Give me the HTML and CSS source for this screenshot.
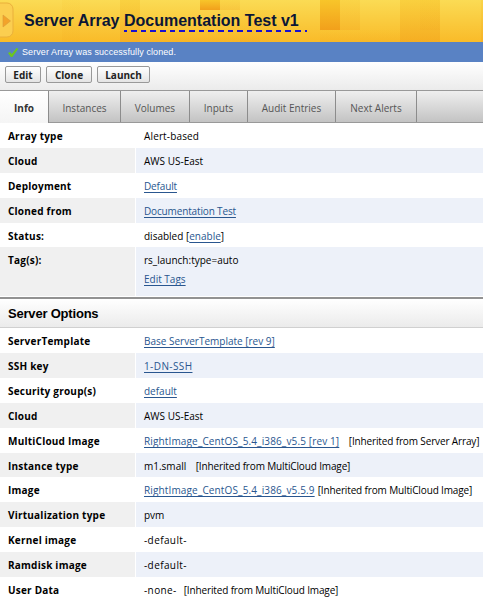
FILE: index.html
```html
<!DOCTYPE html>
<html lang="en">
<head>
<meta charset="utf-8">
<title>Server Array</title>
<link rel="stylesheet" href="styles.css">
</head>
<body>
<header class="banner">
  <svg class="banner-art" width="483" height="42" viewBox="0 0 483 42" aria-hidden="true">
    <defs>
      <linearGradient id="gold" x2="0" y2="1"><stop offset="0" stop-color="#fbdb54"/><stop offset="1" stop-color="#f9bb29"/></linearGradient>
      <linearGradient id="amber" x2="0" y2="1"><stop offset="0" stop-color="#f8c52a"/><stop offset="1" stop-color="#f2a01b"/></linearGradient>
    </defs>
    <rect width="483" height="42" fill="url(#gold)"/>
    <g fill="url(#amber)">
      <rect x="62" width="18" height="42" opacity=".12"/>
      <rect x="120" width="20" height="42" opacity=".45"/>
      <rect x="140" y="30" width="120" height="12" opacity=".25"/>
      <rect x="200" width="20" height="10"/>
      <rect x="220" width="20" height="10" opacity=".25"/>
      <rect x="240" y="10" width="40" height="32" opacity=".2"/>
      <rect x="320" width="20" height="30"/>
      <rect x="340" width="20" height="30" opacity=".3"/>
      <rect x="320" y="30" width="80" height="12" opacity=".15"/>
      <rect x="400" width="40" height="42" opacity=".5"/>
      <rect x="420" width="20" height="30" opacity=".15"/>
      <rect x="481" width="2" height="42" opacity=".3"/>
    </g>
    <rect x="-10" y="3" width="23" height="34" rx="6" fill="#fbce50" stroke="#eab03b"/>
    <path d="M3 15L10.5 21L3 27Z" fill="#f3a32a" stroke="#d99a3b" stroke-width=".6"/>
  </svg>
  <h1 class="title">Server Array <span class="title-name">Documentation Test v1</span></h1>
</header>
<div class="notice">
  <svg class="check" width="12" height="11" viewBox="0 0 12 11" aria-hidden="true"><path d="M1 6L3 5L4.8 7L9.6 1L11.3 1.8L5.4 10L3.8 10Z" fill="#6cc71e"/></svg>
  <span>Server Array was successfully cloned.</span>
</div>
<div class="toolbar">
  <button class="btn edit">Edit</button><button class="btn clone">Clone</button><button class="btn launch">Launch</button>
</div>
<nav class="tabs">
  <a class="tab info active">Info</a><a class="tab instances">Instances</a><a class="tab volumes">Volumes</a><a class="tab inputs">Inputs</a><a class="tab audit">Audit Entries</a><a class="tab alerts">Next Alerts</a>
</nav>
<dl class="rows summary">
  <dt>Array type</dt><dd class="loose">Alert-based</dd>
  <dt>Cloud</dt><dd>AWS US-East</dd>
  <dt>Deployment</dt><dd><a class="tight">Default</a></dd>
  <dt>Cloned from</dt><dd><a class="tight">Documentation Test</a></dd>
  <dt>Status:</dt><dd>disabled [<a>enable</a>]</dd>
  <dt class="tall">Tag(s):</dt><dd class="tall">rs_launch:type=auto<br><a>Edit Tags</a></dd>
</dl>
<h2 class="section">Server Options</h2>
<dl class="rows options">
  <dt>ServerTemplate</dt><dd><a>Base ServerTemplate [rev 9]</a></dd>
  <dt>SSH key</dt><dd><a class="looser">1-DN-SSH</a></dd>
  <dt>Security group(s)</dt><dd><a>default</a></dd>
  <dt>Cloud</dt><dd>AWS US-East</dd>
  <dt>MultiCloud Image</dt><dd><a class="loose">RightImage_CentOS_5.4_i386_v5.5 [rev 1]</a><span class="src wide">[Inherited from Server Array]</span></dd>
  <dt>Instance type</dt><dd>m1.small<span class="src wide">[Inherited from MultiCloud Image]</span></dd>
  <dt>Image</dt><dd><a class="loose">RightImage_CentOS_5.4_i386_v5.5.9</a><span class="src">[Inherited from MultiCloud Image]</span></dd>
  <dt>Virtualization type</dt><dd>pvm</dd>
  <dt>Kernel image</dt><dd class="looser">-default-</dd>
  <dt>Ramdisk image</dt><dd class="looser">-default-</dd>
  <dt>User Data</dt><dd><span class="looser">-none-</span><span class="src mid">[Inherited from MultiCloud Image]</span></dd>
</dl>
</body>
</html>
```
FILE: styles.css
```css
* { box-sizing: border-box; }
html, body { margin: 0; height: 603px; overflow: hidden; }
body { background: #fff; color: #000; font: 10px "Open Sans", "Noto Sans", sans-serif; }
.banner { position: relative; height: 42px; }
.banner-art { position: absolute; left: 0; top: 0; }
.title { position: relative; margin: 0; padding: 11px 0 0 24px; font: bold 16px/20px "Liberation Sans", sans-serif; color: #0b1636; white-space: nowrap; }
.title-name { display: inline-block; height: 21px; padding-right: 8px; background: repeating-linear-gradient(90deg, #1710d0 0 3px, transparent 3px 7px, #1710d0 7px 9.65px) left bottom / 100% 2px no-repeat; }
.notice { display: flex; align-items: center; gap: 3px; height: 20px; padding-left: 7px; background: #5982c4; color: #fff; font: 9px "Liberation Sans", sans-serif; letter-spacing: .08px; }
.toolbar { display: flex; gap: 5px; height: 28px; padding: 4px 5px; background: linear-gradient(#fff, #ebebeb); }
.btn { height: 17px; padding: 0; border: 1px solid #999; border-radius: 2px; background: linear-gradient(#fff, #e4e4e4); color: #222; font: bold 10px/14px "Open Sans", sans-serif; }
.edit { width: 36px; }
.clone { width: 46px; }
.launch { width: 53px; }
.tabs { display: flex; height: 33px; border-top: 1px solid #999; border-bottom: 1px solid #999; background: linear-gradient(#efefef, #c3c3c3); }
.tab { border-right: 1px solid #8c8c8c; text-align: center; line-height: 34px; color: #555; }
.active { height: 32px; background: linear-gradient(#fff, #f5f5f5); color: #333; font-weight: bold; }
.info { width: 49px; }
.instances { width: 72px; }
.volumes { width: 69px; }
.inputs { width: 58px; }
.audit { width: 88px; }
.alerts { width: 81px; }
.rows { display: grid; grid-template-columns: 135px 1fr; column-gap: 1px; margin: 0; line-height: 26.6px; white-space: nowrap; }
.summary { grid-template-rows: 25px 25px 25px 25px 24px 49px; }
.options { grid-auto-rows: 24.86px; padding-top: .3px; }
dt { padding-left: 8px; font-weight: bold; letter-spacing: .22px; }
dd { margin: 0; padding-left: 8px; }
dt:nth-of-type(even) { background: #f0f0f0; }
dd:nth-of-type(even) { background: #edf1f9; }
dd.tall { line-height: 18.5px; padding-top: 4px; }
.rows a { color: #29568f; text-decoration: underline; text-decoration-skip-ink: none; text-underline-offset: 2px; }
.section { height: 31px; margin: 1px 0 0; padding-left: 8px; border-top: 2px solid #929292; border-bottom: 1px solid #d0d0d0; background: linear-gradient(#fff, #ebebeb); font: bold 13px/30px "Liberation Sans", sans-serif; letter-spacing: -.2px; }
.loose { letter-spacing: .14px; }
.looser { letter-spacing: .4px; }
.tight { letter-spacing: -.15px; }
.src { margin-left: 3px; letter-spacing: -.14px; }
.mid { margin-left: 7px; }
.wide { margin-left: 9.5px; }
```
